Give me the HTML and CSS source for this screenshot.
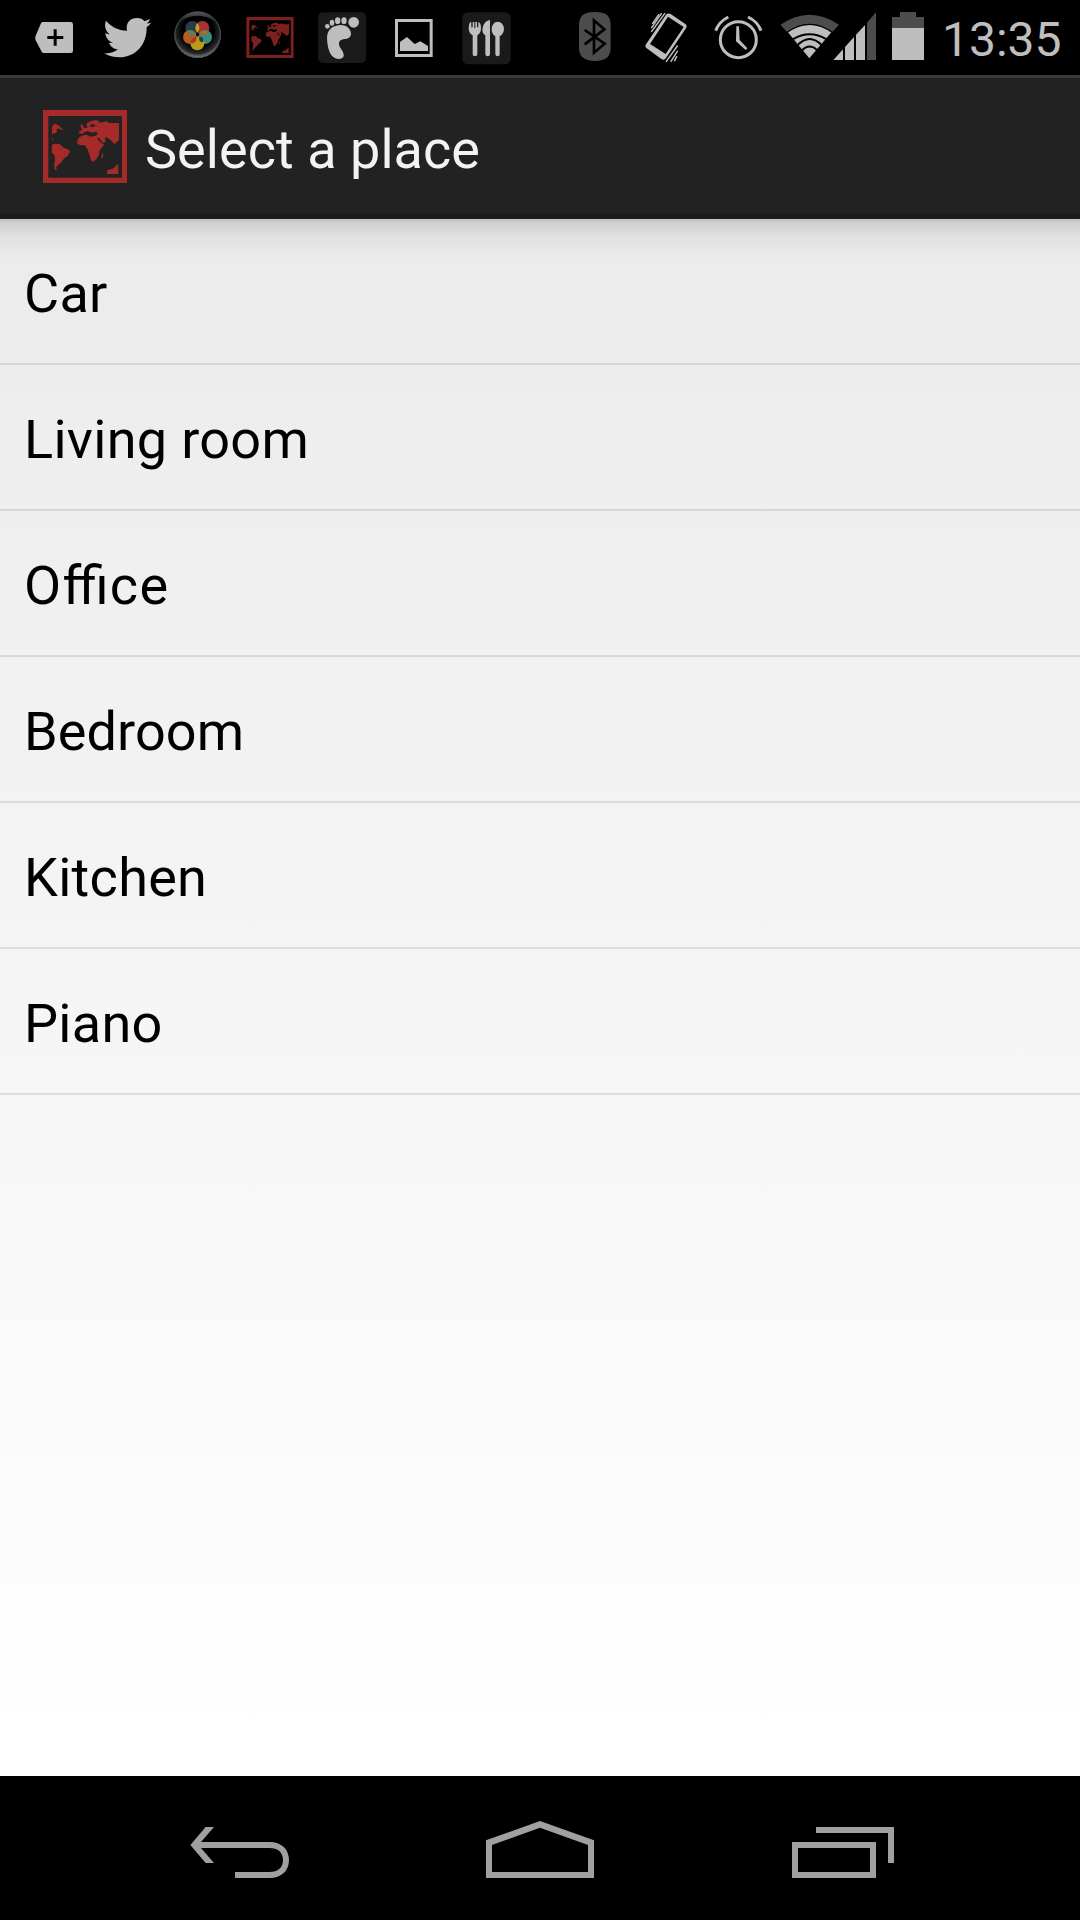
FILE: index.html
```html
<!DOCTYPE html>
<html lang="en">
<head>
<meta charset="utf-8">
<title>Select a place</title>
<link rel="stylesheet" href="styles.css">
</head>
<body>
<svg class="defs" aria-hidden="true">
  <symbol id="map" viewBox="69 60 252 219">
    <path fill-rule="evenodd" d="M69 60H321V279H69ZM85 78V263H306V78Z"/>
    <path d="M96 109L103 101L112 104L118 108L120 111L132 120L118 117L113 115L109 121L112 126L104 130L96 132ZM94 144L99 148L103 150L97 150ZM96 164L106 161L120 163L131 173L147 179L150 185L143 198L133 204L125 216L113 226L108 233L111 240L104 239L102 225L105 209L104 197L95 187Z"/>
    <path fill-rule="evenodd" d="M176 130L179 123L187 121L184 115L181 106L186 101L189 109L195 115L203 112L199 105L202 99L214 93L228 90L239 94L235 98L247 97L259 94L268 99H297V150L283 163L275 153L264 144L258 142L254 146L258 154L248 160L240 158L252 163L249 169L238 182L237 193L230 206L220 216L213 211L209 196L204 181L195 166L180 166L171 160L174 146L185 137L200 134L211 140L227 137L233 132L229 125L213 128L204 123L193 126L187 132ZM208 108L216 112L222 109L234 106L222 105L218 101ZM231 145L244 159L248 158L237 144ZM245 193L249 188L249 201L244 207ZM262 241L278 236L295 221V252H261Z"/>
  </symbol>
</svg>
<div class="screen">
  <header class="status">
    <div class="icons">
      <svg class="slot" viewBox="54 0 216 225"><path class="lit" fill-rule="evenodd" d="M128 66H212Q219 66 219 73V152Q219 159 212 159H131Q127 159 125 155L107 121Q104 113 107 107L123 70Q125 66 128 66ZM161 88V108H142V117H161V137H170V117H190V108H170V88Z"/></svg>
      <svg class="slot" viewBox="270 0 216 225"><path class="lit" d="M318 62C333 80 355 91 381 92C376 67 392 54 411 54C421 54 428 58 433 63C440 62 446 59 450 57C448 63 445 67 440 71L453 68C450 73 445 78 440 81C441 135 406 172 358 172C341 172 326 168 312 160C329 161 343 157 354 148C341 147 331 139 327 128H339C325 124 317 113 316 99C320 101 325 103 329 103C316 93 312 76 318 62Z"/></svg>
      <svg class="slot" viewBox="486 0 216 225">
        <defs>
          <radialGradient id="orb" cx=".5" cy=".42" r=".62"><stop offset=".55" stop-color="#000"/><stop offset=".78" stop-color="#252729"/><stop offset="1" stop-color="#b6babd"/></radialGradient>
          <linearGradient id="gloss" x1="0" y1="0" x2="0" y2="1"><stop offset="0" stop-color="#565a60"/><stop offset="1" stop-color="#111315"/></linearGradient>
        </defs>
        <circle cx="593" cy="104" r="70" fill="url(#orb)"/>
        <circle cx="593" cy="104" r="68.500" fill="none" stroke="#4b4f54" stroke-width="3"/>
        <path d="M537 68Q558 35 593 35T649 68Q625 47 593 47T537 68Z" fill="url(#gloss)"/>
        <circle cx="577" cy="84" r="21" fill="#273b4b"/><circle cx="607" cy="84" r="21" fill="#a83337"/><circle cx="615" cy="111" r="21" fill="#3b8d7a"/><circle cx="592" cy="130" r="21" fill="#b79d18"/><circle cx="570" cy="111" r="21" fill="#b15d25"/>
        <path d="M592 69Q605 84 592 98Q580 84 592 69Z" fill="#c3a519"/><path d="M598 101Q602 88 624 95Q619 108 598 101Z" fill="#b96428"/><path d="M598 110Q614 110 609 127Q594 127 598 110Z" fill="#273b4b"/><path d="M588 110Q570 114 573 128Q592 130 588 110Z" fill="#a9372e"/><path d="M587 103Q576 85 562 93Q567 107 587 103Z" fill="#398a78"/>
        <path d="M588 102L593 97L598 102L596 109L590 109Z" fill="#080808"/>
      </svg>
      <svg class="slot dim-map" viewBox="702 0 216 225"><use href="#map" x="738" y="51" width="144" height="123" /></svg>
      <svg class="slot" viewBox="228 0 216 225"><rect class="tile" x="264" y="37" width="144" height="152" rx="15"/><g class="lit"><circle cx="371" cy="67" r="16"/><ellipse cx="342" cy="62" rx="8" ry="10"/><ellipse cx="323" cy="62" rx="8" ry="10"/><ellipse cx="306" cy="68" rx="7" ry="9"/><circle cx="292" cy="79" r="7"/><path d="M291 113C292 87 309 76 332 75C352 75 362 88 363 101C363 112 354 116 343 117C325 119 323 132 333 146C341 158 345 168 337 174C329 179 314 177 307 169C295 154 292 136 291 113Z"/></g></svg>
      <svg class="slot" viewBox="444 0 216 225"><path class="lit" fill-rule="evenodd" d="M495 57H608V171H495ZM504 66V162H599V66ZM510 153V126L531 111L554 132L571 124L594 138V153Z"/></svg>
      <svg class="slot" viewBox="660 0 216 225"><rect class="tile" x="697" y="37" width="145" height="156" rx="17"/><g class="lit"><path d="M717 75Q719 65 724 66V82H728V66H733V85H736V66H741V82H745V66Q751 67 753 80Q754 99 742 106V163Q742 169 735 169T728 163V106Q713 99 717 75Z"/><path d="M780 60V162Q780 169 773 169T766 162V106Q754 99 758 83Q763 62 780 60Z"/><path d="M803 65Q820 66 822 86Q822 101 809 109V163Q809 169 803 169T796 163V109Q784 101 785 86Q787 66 803 65Z"/></g></svg>
    </div>
    <div class="icons">
      <svg class="slot" viewBox="24 0 216 225"><path class="dark" d="M135 36C169 36 182 47 182 77V142C182 170 169 183 135 183S87 170 87 142V77C87 47 101 36 135 36Z"/><path d="M104 90L164 131L132 158V61L163 88L104 133" fill="none" stroke="#000" stroke-width="8"/></svg>
      <svg class="slot" viewBox="240 0 216 225"><path class="lit" fill-rule="evenodd" d="M349 43Q355 38 362 42L407 73Q412 77 409 83L348 174Q342 182 334 177L289 144Q284 140 287 134ZM354 50L300 132L347 162L401 81Z"/><path d="M308 70L326 44M305 83L334 41M305 94L344 41M349 184L382 138M363 184L382 154M374 182L380 170" fill="none" stroke="#bebebe" stroke-width="4.500" stroke-linecap="round"/></svg>
      <svg class="slot" viewBox="456 0 216 225"><g fill="none" stroke="#bebebe"><circle cx="565" cy="119" r="54" stroke-width="9"/><path d="M497 92Q508 64 535 51M594 51Q622 64 633 92" stroke-width="9"/></g><path class="lit" d="M559 79H567L569 120L592 145L587 150L558 124Z"/></svg>
      <svg class="signal" viewBox="12 0 330 225"><path class="dark" d="M31 74Q119 14 207 74L186 97Q119 50 52 97Z"/><path class="lit" d="M53 96Q119 53 185 96L118 175Z"/><path d="M68 118Q119 88 170 118M82 136Q119 98 156 136M96 151Q119 128 142 151" fill="none" stroke="#000" stroke-width="6"/><path d="M50 98Q119 48 188 98" fill="none" stroke="#000" stroke-width="4"/><path class="lit" d="M190 180L219 148V180ZM225 141L252 111V180H225ZM258 104L285 75V180H258Z"/><path class="dark" d="M291 68L318 37V180H291Z"/></svg>
      <svg class="battery" viewBox="342 0 144 225"><path class="dark" d="M366 51H390V36H438V51H462V84H366Z"/><path class="lit" d="M366 84H462V180H366Z"/></svg>
      <span class="clock">13:35</span>
    </div>
  </header>
  <div class="action">
    <svg class="logo"><use href="#map"/></svg>
    <h1>Select a place</h1>
  </div>
  <main>
    <ul class="places">
      <li>Car</li>
      <li>Living room</li>
      <li class="wide">Office</li>
      <li class="tight">Bedroom</li>
      <li>Kitchen</li>
      <li>Piano</li>
    </ul>
  </main>
  <nav>
    <svg viewBox="0 48 480 432"><path d="M91 255L137 201H162L123 246H328C365 246 387 268 387 300S365 354 328 354H225V336H328C354 336 369 323 369 300S354 264 328 264H123L162 309H137Z"/></svg>
    <svg viewBox="900 48 480 432"><path fill-rule="evenodd" d="M978 241L1140 183L1302 241V354H978ZM996 255V336H1284V255L1140 203Z"/></svg>
    <svg viewBox="0 48 480 432"><path fill-rule="evenodd" d="M96 246H348V354H96ZM114 264V336H330V264ZM168 201H402V309H384V219H168Z"/></svg>
  </nav>
</div>
</body>
</html>
```
FILE: styles.css
```css
body { margin: 0; font-family: Roboto, sans-serif; }
.defs { display: none; }
.screen { width: 1080px; height: 1920px; display: flex; flex-direction: column; background: linear-gradient(#e8e8e8, #fff 1740px); }
.status { height: 75px; display: flex; justify-content: space-between; background: #000; padding: 0 18px; }
.icons { display: flex; }
.slot { width: 72px; height: 75px; }
.signal { width: 110px; height: 75px; }
.battery { width: 48px; height: 75px; }
.lit { fill: #bebebe; }
.dark { fill: #4c4c4c; }
.tile { fill: #1b191a; }
.dim-map { fill: #7c2020; }
.clock { box-sizing: border-box; width: 130px; padding-left: 10px; font-size: 48px; line-height: 80px; color: #bebebe; white-space: nowrap; }
.action { height: 144px; box-sizing: border-box; display: flex; align-items: center; background: #222; border-top: 3px solid #3a3a3a; border-bottom: 6px solid #1b1b1b; padding-left: 43px; gap: 18px; }
.logo { width: 84px; height: 73px; margin-top: 2px; fill: #a52a2a; }
h1 { margin: 0; padding-top: 7px; font-size: 54px; font-weight: 400; letter-spacing: 0.05px; color: #f3f3f3; }
main { flex: 1; background: linear-gradient(rgba(0, 0, 0, .16) 3px, rgba(0, 0, 0, .12) 3px, rgba(0, 0, 0, .045) 18px, transparent 40px); }
.places { margin: 0; padding: 0; list-style: none; }
.places li { box-sizing: border-box; height: 146px; padding: 2px 0 0 24px; border-bottom: 2px solid rgba(0, 0, 0, .1); font-size: 54px; line-height: 145px; letter-spacing: 0.3px; color: #000; }
.places .wide { letter-spacing: 1.3px; font-feature-settings: "liga" 1; }
.places .tight { letter-spacing: 0.1px; }
nav { height: 144px; box-sizing: border-box; padding: 0 160px; background: #000; display: flex; justify-content: space-between; }
nav svg { width: 160px; height: 144px; fill: #a0a0a0; }
```
